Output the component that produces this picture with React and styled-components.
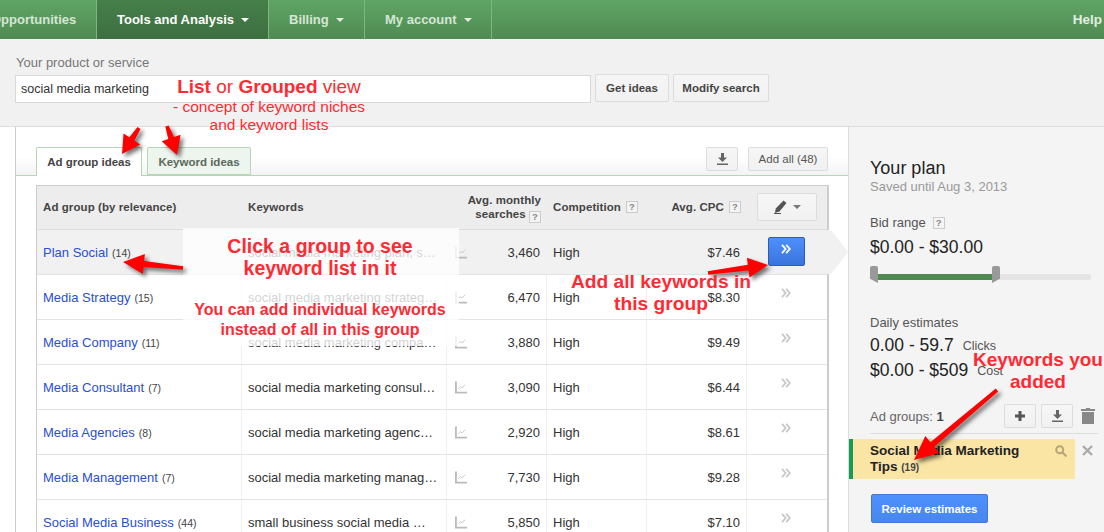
import React from "react";
import styled, { createGlobalStyle } from "styled-components";

const Global = createGlobalStyle`
  html, body { margin: 0; padding: 0; background: #fff; }
  body { font-family: "Liberation Sans", Arial, sans-serif; color: #222; }
  * { box-sizing: border-box; }
`;
const Page = styled.div`
  position: relative; width: 1104px; height: 532px; overflow: hidden;
  display: flex; flex-direction: column;
`;
const Nav = styled.nav`
  height: 39px; flex: none; display: flex; align-items: stretch;
  background: linear-gradient(#5fa565, #4f8a52);
`;
const NavItem = styled.a`
  display: flex; align-items: center; gap: 7px; flex: none;
  width: ${p => p.$w}px; padding-left: 20px; margin-left: ${p => p.$ml || 0}px;
  font-size: 13px; font-weight: 700; color: ${p => (p.$active ? "#fff" : "#d6e6d6")};
  border-right: 1px solid #7fb483;
  background: ${p => (p.$active ? "linear-gradient(#467f49, #3d6f41)" : "none")};
`;
const Caret = styled.span`
  width: 0; height: 0; border: 4px solid transparent; border-top: 4px solid ${p => p.$c || "#fff"};
  border-bottom: 0; display: inline-block; flex: none;
`;
const Help = styled.a`
  margin-left: auto; padding-right: 2px; align-self: center;
  font-size: 13.5px; font-weight: 700; color: #e2eee2;
`;
const SearchBar = styled.section`
  height: 88px; flex: none; padding: 15px 15px 0; background: #f1f1f1; border-bottom: 1px solid #ddd;
`;
const Label = styled.div`
  font-size: 13px; line-height: 16px; color: #777; padding: 1px 0 0 1px; height: 16px;
`;
const SearchRow = styled.div`
  display: flex; align-items: flex-start; margin-top: 4px;
`;
const Input = styled.div`
  width: 576px; height: 28px; margin-top: 1px; padding-left: 5px; background: #fff; border: 1px solid #d9d9d9;
  font-size: 12.5px; line-height: 27px; color: #333;
`;
const Btn = styled.button`
  height: ${p => p.$h || 28}px; width: ${p => p.$w}px; margin-left: ${p => p.$ml || 0}px; padding: 0;
  display: inline-flex; align-items: center; justify-content: center; gap: 6px; flex: none;
  border: 1px solid #dcdcdc; border-radius: 2px; background: linear-gradient(#f6f6f6, #f1f1f1);
  font: ${p => (p.$plain ? 400 : 700)} 11.5px "Liberation Sans", Arial, sans-serif; color: ${p => (p.$plain ? "#555" : "#444")};
`;
const Main = styled.main`
  flex: 1; display: flex; min-height: 0;
`;
const Left = styled.div`
  width: 849px; flex: none; padding-left: 15px; border-right: 1px solid #ddd; background: #fff;
`;
const LeftInner = styled.div`
  height: 100%; border-left: 1px solid #ccc; padding-top: 20px;
`;
const TabStrip = styled.div`
  height: 29px; display: flex; align-items: flex-start; padding: 0 20px;
  border-bottom: 1px solid #b6d6b8; background: linear-gradient(#fff 35%, #f3f3f3);
`;
const Tab = styled.div`
  height: ${p => (p.$active ? 29 : 28)}px; width: ${p => p.$w}px; margin-right: 5px; flex: none;
  display: flex; align-items: center; justify-content: center; padding-top: ${p => (p.$active ? 0 : 2)}px;
  border: 1px solid #b6d6b8; ${p => (p.$active ? "border-bottom: 0;" : "")} border-radius: 2px 2px 0 0;
  background: ${p => (p.$active ? "#fff" : "#eef4ee")};
  font-size: 11.5px; font-weight: 700; color: ${p => (p.$active ? "#444" : "#5a6a5a")};
`;
const TabActions = styled.div`
  margin-left: auto; display: flex; gap: 10px;
`;
const Table = styled.div`
  margin: 9px 0 0 20px; width: 793px; border: 1px solid #ccc; border-bottom: 0; border-right-width: 2px;
`;
const cols = "205px 205px 20px 80px 100px 100px 80px";
const HeadRow = styled.div`
  display: grid; grid-template-columns: ${cols}; height: 44px; padding-bottom: 2px; background: #ededed; border-bottom: 1px solid #ddd;
  align-items: center; font-size: 11.5px; font-weight: 700; color: #444;
`;
const HeadCell = styled.div`
  padding: ${p => (p.$span ? 2 : 0)}px 6px 0; display: flex; align-items: center; gap: 5px; line-height: 14px; letter-spacing: .08px;
  justify-content: ${p => (p.$right ? "flex-end" : "flex-start")}; text-align: ${p => (p.$right ? "right" : "left")};
  grid-column: ${p => p.$span || "auto"};
`;
const Q = styled.span`
  display: inline-block; width: 12px; height: 12px; flex: none; border: 1px solid #ccc; background: #f4f4f4;
  font-size: 9.5px; line-height: 10px; text-align: center; font-weight: 700; color: #888; vertical-align: -2px;
`;
const Row = styled.div`
  position: relative; display: grid; grid-template-columns: ${cols}; height: 45px;
  border-bottom: 1px solid #e3e3e3; background: ${p => (p.$sel ? "#f1f1f1" : "#fff")};
  font-size: 13px; color: #333;
  ${p => p.$sel ? `&::after { content: ""; position: absolute; left: 790px; top: 0; width: 21px; height: 44px;
    background: #f1f1f1; clip-path: polygon(0 0, 4px 0, 21px 50%, 4px 100%, 0 100%); }` : ""}
`;
const Cell = styled.div`
  display: flex; align-items: center; white-space: nowrap; overflow: hidden;
  padding: 0 ${p => p.$pr ?? 6}px 0 ${p => p.$pl ?? 6}px;
  justify-content: ${p => (p.$right ? "flex-end" : p.$center ? "center" : "flex-start")};
  border-right: ${p => (p.$plain ? "0" : "1px solid #f0f0f0")};
`;
const GroupLink = styled.a`
  color: #2a4fd0; margin-right: 4px; font-size: 13px;
`;
const Count = styled.span`
  font-size: 10.5px; color: #444; padding-top: 2px;
`;
const AddBlue = styled.div`
  position: relative; z-index: 1; width: 37px; height: 29px; margin-top: -1px; padding-bottom: 6px;
  display: flex; align-items: center; justify-content: center;
  border: 1px solid #2f5bb7; border-radius: 2px; background: linear-gradient(#4d90fe, #3a74db);
`;
const AddGhost = styled.div`
  margin-top: -8px; display: flex;
`;
const Right = styled.aside`
  flex: 1; min-width: 0; background: #f4f4f4; padding: 30px 6px 0 21px; color: #333;
`;
const PlanTitle = styled.h2`
  margin: 0; font-size: 18px; line-height: 22px; font-weight: 400; color: #222;
`;
const Saved = styled.div`
  font-size: 13px; line-height: 16px; color: #999;
`;
const Caption = styled.div`
  margin-top: ${p => p.$mt}px; font-size: 13px; line-height: 16px; color: #555;
  display: flex; align-items: center; gap: 7px;
`;
const Big = styled.div`
  margin-top: ${p => p.$mt}px; font-size: 17.5px; line-height: ${p => p.$lh}px; color: #222;
  display: flex; align-items: center; gap: 9px;
`;
const Unit = styled.span`
  font-size: 12.5px; line-height: 14px; color: #555; padding-top: 2px;
`;
const Slider = styled.div`
  position: relative; margin-top: 8px; width: 221px; height: 17px;
`;
const Track = styled.div`
  position: absolute; left: 0; right: 0; top: 8px; height: 6px; background: #e4e4e4; border-radius: 2px;
`;
const Fill = styled.div`
  position: absolute; left: 8px; width: 114px; top: 8px; height: 6px; background: #4f8a52;
`;
const Thumb = styled.div`
  position: absolute; top: 0; width: 8px; height: 17px; background: #999;
  border-radius: 2px 2px 0 0;
  clip-path: ${p => (p.$flip ? "polygon(0 0,100% 0,100% 75%,0 100%)" : "polygon(0 0,100% 0,100% 100%,0 75%)")};
  left: ${p => p.$x}px;
`;
const GroupsHead = styled.div`
  margin-top: 22px; padding-bottom: 5px; border-bottom: 1px solid #ddd; height: 30px;
  display: flex; align-items: flex-start; font-size: 13px; color: #666;
`;
const GroupsLabel = styled.span`
  line-height: 25px; margin-right: auto; b { color: #444; }
`;
const HeadBtns = styled.div`
  display: flex; gap: 5px; align-items: center;
`;
const TrashBox = styled.span`
  display: flex; margin: 0 3px;
`;
const ItemRow = styled.div`
  margin: 5px 0 0 -21px; display: flex; align-items: flex-start;
`;
const Item = styled.div`
  position: relative; width: 226px; height: 40px; padding: 4px 30px 0 17px; background: #fae5a4; border-left: 4px solid #0f9d58;
  font-size: 13.5px; font-weight: 700; line-height: 16px; color: #222;
`;
const ItemCount = styled.span`
  font-size: 10px; color: #444;
`;
const ItemSearch = styled.span`
  position: absolute; right: 8px; top: 6px; display: flex;
`;
const Close = styled.span`
  margin: 6px 0 0 7px; display: flex;
`;
const Review = styled.button`
  margin: 15px 0 0 1px; width: 117px; height: 29px; padding: 0; border: 1px solid #3f78d8; border-radius: 2px;
  background: linear-gradient(#4d90fe, #4787ed); color: #fff;
  font: 700 11.5px "Liberation Sans", Arial, sans-serif;
`;
const Veil = styled.div`
  position: absolute; left: 183px; top: 228px; width: 276px; height: 118px; background: rgba(255,255,255,.78);
`;
const Note = styled.div`
  position: absolute; left: ${p => p.$cx - 200}px; top: ${p => p.$y}px; width: 400px; text-align: center;
  color: #ff2a33; font-size: ${p => p.$fs}px; line-height: ${p => p.$lh}px; font-weight: ${p => (p.$b ? 700 : 400)}; white-space: nowrap;
  b { font-weight: 700; }
`;
const ArrowLayer = styled.svg`
  position: absolute; left: 0; top: 0; filter: drop-shadow(3px 3px 2px rgba(0,0,0,.55)); pointer-events: none;
`;

function arrowPts([x1, y1], [x2, y2], w = 3, hl = 20, hw = 10) {
  const d = Math.hypot(x2 - x1, y2 - y1), ux = (x2 - x1) / d, uy = (y2 - y1) / d, nx = -uy, ny = ux;
  const bx = x2 - ux * hl, by = y2 - uy * hl;
  const p = [
    [x1 + nx * w * .6, y1 + ny * w * .6], [bx + nx * w, by + ny * w], [bx + nx * hw, by + ny * hw], [x2, y2],
    [bx - nx * hw, by - ny * hw], [bx - nx * w, by - ny * w], [x1 - nx * w * .6, y1 - ny * w * .6],
  ];
  return p.map(q => q.map(v => v.toFixed(1)).join(",")).join(" ");
}
const arrows = [
  [[139, 128], [122, 154], 3, 18, 10],
  [[167, 126], [177, 155], 3, 18, 10],
  [[183, 268], [123, 262], 3, 21, 10],
  [[708, 273], [768, 265], 3, 20, 10],
  [[997, 390], [914, 460], 3, 24, 11],
];

const Trend = () => (
  <svg width="13" height="13" viewBox="0 0 13 13" fill="none">
    <path d="M1 0v12h12" stroke="#bbb" strokeWidth="2" />
    <path d="M3.5 8 6 5.5l1.5 1.5L11 3.5" stroke="#c4c4c4" strokeWidth="1" />
  </svg>
);
const Chevrons = ({ c, w = 1.8 }) => (
  <svg width="10" height="10" viewBox="0 0 10 10" fill="none" stroke={c} strokeWidth={w}>
    <path d="M1 .8 4.6 5 1 9.2M5.2 .8 8.8 5 5.2 9.2" />
  </svg>
);
const Download = ({ c = "#666" }) => (
  <svg width="11" height="12" viewBox="0 0 11 12" fill={c}>
    <path d="M4 0h3v4.5h3L5.5 9 1 4.5h3zM0 10.5h11V12H0z" />
  </svg>
);
const Pencil = () => (
  <svg width="13" height="14" viewBox="0 0 13 14" fill="#555">
    <path d="M9.5.5 12.5 3l-7 8.5-4.5 1.5.7-4.5zM0 13h7v1H0z" />
  </svg>
);
const Plus = () => (
  <svg width="10" height="10" viewBox="0 0 10 10" fill="#555"><path d="M3.5 0h3v3.5H10v3H6.5V10h-3V6.5H0v-3h3.5z" /></svg>
);
const Trash = () => (
  <svg width="14" height="16" viewBox="0 0 14 16" fill="#888">
    <path d="M5 0h4v1h5v2H0V1h5zM1 4h12v12H1z" />
  </svg>
);
const Magnify = () => (
  <svg width="12" height="12" viewBox="0 0 12 12" fill="none" stroke="#b5a67a" strokeWidth="2">
    <circle cx="4.7" cy="4.7" r="3.5" /><path d="m7.5 7.5 4 4" />
  </svg>
);
const Cross = () => (
  <svg width="11" height="11" viewBox="0 0 11 11" stroke="#aaa" strokeWidth="2.4"><path d="m1 1 9 9M10 1l-9 9" /></svg>
);

const rows = [
  ["Plan Social", 14, "social media marketing plan, s…", "3,460", "$7.46"],
  ["Media Strategy", 15, "social media marketing strateg…", "6,470", "$8.30"],
  ["Media Company", 11, "social media marketing compa…", "3,880", "$9.49"],
  ["Media Consultant", 7, "social media marketing consul…", "3,090", "$6.44"],
  ["Media Agencies", 8, "social media marketing agenc…", "2,920", "$8.61"],
  ["Media Management", 7, "social media marketing manag…", "7,730", "$9.28"],
  ["Social Media Business", 44, "small business social media …", "5,850", "$7.10"],
];

export default function App() {
  return (
    <Page>
      <Global />
      <Nav>
        <NavItem $w={126} $ml={-29}>Opportunities</NavItem>
        <NavItem $w={172} $active>Tools and Analysis <Caret /></NavItem>
        <NavItem $w={96}>Billing <Caret $c="#e4efe4" /></NavItem>
        <NavItem $w={127}>My account <Caret $c="#e4efe4" /></NavItem>
        <Help>Help</Help>
      </Nav>
      <SearchBar>
        <Label>Your product or service</Label>
        <SearchRow>
          <Input>social media marketing</Input>
          <Btn $w={74} $ml={4}>Get ideas</Btn>
          <Btn $w={96} $ml={4}>Modify search</Btn>
        </SearchRow>
      </SearchBar>
      <Main>
        <Left>
          <LeftInner>
            <TabStrip>
              <Tab $active $w={106}>Ad group ideas</Tab>
              <Tab $w={104}>Keyword ideas</Tab>
              <TabActions>
                <Btn $w={32} $h={24}><Download /></Btn>
                <Btn $w={80} $h={24} $plain>Add all (48)</Btn>
              </TabActions>
            </TabStrip>
            <Table>
              <HeadRow>
                <HeadCell>Ad group (by relevance)</HeadCell>
                <HeadCell>Keywords</HeadCell>
                <HeadCell $right $span="span 2">
                  <span>Avg. monthly<br />searches <Q>?</Q></span>
                </HeadCell>
                <HeadCell>Competition <Q>?</Q></HeadCell>
                <HeadCell $right>Avg. CPC <Q>?</Q></HeadCell>
                <HeadCell>
                  <Btn $w={60} $h={28} $ml={4}><Pencil /><Caret $c="#777" /></Btn>
                </HeadCell>
              </HeadRow>
              {rows.map((r, i) => (
                <Row key={r[0]} $sel={i === 0}>
                  <Cell><GroupLink>{r[0]}</GroupLink><Count>({r[1]})</Count></Cell>
                  <Cell>{r[2]}</Cell>
                  <Cell $plain $pl={8} $pr={0}><Trend /></Cell>
                  <Cell $right>{r[3]}</Cell>
                  <Cell>High</Cell>
                  <Cell $right>{r[4]}</Cell>
                  <Cell $center $plain $pl={0} $pr={2}>
                    {i === 0
                      ? <AddBlue><Chevrons c="#fff" /></AddBlue>
                      : <AddGhost><Chevrons c="#c8c8c8" /></AddGhost>}
                  </Cell>
                </Row>
              ))}
            </Table>
          </LeftInner>
        </Left>
        <Right>
          <PlanTitle>Your plan</PlanTitle>
          <Saved>Saved until Aug 3, 2013</Saved>
          <Caption $mt={20}>Bid range <Q>?</Q></Caption>
          <Big $mt={5} $lh={22}>$0.00 - $30.00</Big>
          <Slider>
            <Track /><Fill />
            <Thumb $x={0} /><Thumb $x={122} $flip />
          </Slider>
          <Caption $mt={32}>Daily estimates</Caption>
          <Big $mt={2} $lh={24}>0.00 - 59.7 <Unit>Clicks</Unit></Big>
          <Big $mt={1} $lh={24}>$0.00 - $509 <Unit>Cost</Unit></Big>
          <GroupsHead>
            <GroupsLabel>Ad groups: <b>1</b></GroupsLabel>
            <HeadBtns>
              <Btn $w={32} $h={24}><Plus /></Btn>
              <Btn $w={32} $h={24}><Download /></Btn>
              <TrashBox><Trash /></TrashBox>
            </HeadBtns>
          </GroupsHead>
          <ItemRow>
            <Item>
              Social Media Marketing Tips <ItemCount>(19)</ItemCount>
              <ItemSearch><Magnify /></ItemSearch>
            </Item>
            <Close><Cross /></Close>
          </ItemRow>
          <Review>Review estimates</Review>
        </Right>
      </Main>
      <Veil />
      <ArrowLayer width="1104" height="532">
        {arrows.map((a, i) => <polygon key={i} points={arrowPts(...a)} fill="#f00" />)}
      </ArrowLayer>
      <Note $cx={269} $y={76} $fs={19} $lh={22}><b>List</b> or <b>Grouped</b> view</Note>
      <Note $cx={269} $y={98} $fs={15.5} $lh={18}>- concept of keyword niches</Note>
      <Note $cx={269} $y={116} $fs={15.5} $lh={18}>and keyword lists</Note>
      <Note $cx={320} $y={235} $fs={19.5} $lh={22} $b>Click a group to see<br />keyword list in it</Note>
      <Note $cx={320} $y={300} $fs={16} $lh={20} $b>You can add individual keywords<br />instead of all in this group</Note>
      <Note $cx={661} $y={271} $fs={19.2} $lh={22} $b>Add all keywords in<br />this group</Note>
      <Note $cx={1038} $y={349} $fs={19} $lh={22} $b>Keywords you<br />added</Note>
    </Page>
  );
}
